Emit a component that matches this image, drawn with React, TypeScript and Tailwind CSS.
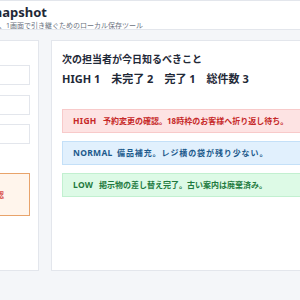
import React from "react";

const items = [
  {
    level: "HIGH",
    text: "予約変更の確認。18時枠のお客様へ折り返し待ち。",
    box: "bg-[#fde3e3] border-[#f8caca] text-[#c62828]",
    tag: "w-[30px]",
    gap: "",
  },
  {
    level: "NORMAL",
    text: "備品補充。レジ横の袋が残り少ない。",
    box: "bg-[#e1f0fd] border-[#c4e0f8] text-[#1d5a8c]",
    tag: "w-[44px]",
    gap: "tracking-[0.9px]",
  },
  {
    level: "LOW",
    text: "掲示物の差し替え完了。古い案内は廃棄済み。",
    box: "bg-[#ddfae6] border-[#c2f0d0] text-[#1f7a3f]",
    tag: "w-[26px]",
    gap: "",
  },
];

function Header() {
  return (
    <div className="h-[30px] bg-white border-t border-b border-[#e3e6ec] overflow-hidden">
      <div className="pt-[3px]">
        <div className="ml-[-80px] w-[300px] text-[13px] leading-[17px] font-bold text-[#1f2937]">Handover Snapshot</div>
        <div className="ml-[-77px] w-[220px] text-right text-[7px] leading-[9px] text-[#6b7280]">
          今日の共有事項を、1画面で引き継ぐためのローカル保存ツール
        </div>
      </div>
    </div>
  );
}

function LeftCard() {
  return (
    <div className="w-[180px] shrink-0 ml-[-141px] h-[231px] bg-white border border-[#e3e6ec] pt-[24px] pr-[8px] pl-[12px]">
      <div className="flex flex-col gap-[9.5px]">
        <div className="h-[20px] border border-[#e3e6ec] bg-white" />
        <div className="h-[20px] border border-[#e3e6ec] bg-white" />
        <div className="h-[20px] border border-[#e3e6ec] bg-white" />
      </div>
      <div className="mt-[29px] h-[43px] border border-[#e8a36a] bg-[#fff5ec] flex items-center justify-end pr-[25px] text-[8px] font-bold text-[#d9534f]">
        保存前の確認
      </div>
    </div>
  );
}

function RightCard() {
  return (
    <div className="w-[400px] shrink-0 h-[231px] bg-white border border-[#e3e6ec] pt-[11px] px-[10px]">
      <div className="text-[10px] leading-[14px] font-bold text-[#1f2937]">次の担当者が今日知るべきこと</div>
      <div className="mt-[6px] text-[11px] leading-[14px] font-bold text-[#1f2937]">
        HIGH 1　未完了 2　完了 1　総件数 3
      </div>
      <div className="mt-[23px] flex flex-col gap-[8px]">
        {items.map((it) => (
          <div key={it.level} className={`h-[24px] border flex items-center pl-[10px] text-[8px] font-bold ${it.box}`}>
            <span className={`${it.tag} shrink-0 text-[8.5px] tracking-[0.3px]`}>{it.level}</span>
            <span className={it.gap}>{it.text}</span>
          </div>
        ))}
      </div>
    </div>
  );
}

export default function App() {
  return (
    <div
      className="w-[300px] h-[300px] overflow-hidden bg-[#f4f6f9]"
      style={{ fontFamily: '"Noto Sans", "Noto Sans CJK JP", sans-serif' }}
    >
      <Header />
      <div className="flex gap-[12px] pt-[10px]">
        <LeftCard />
        <RightCard />
      </div>
    </div>
  );
}
